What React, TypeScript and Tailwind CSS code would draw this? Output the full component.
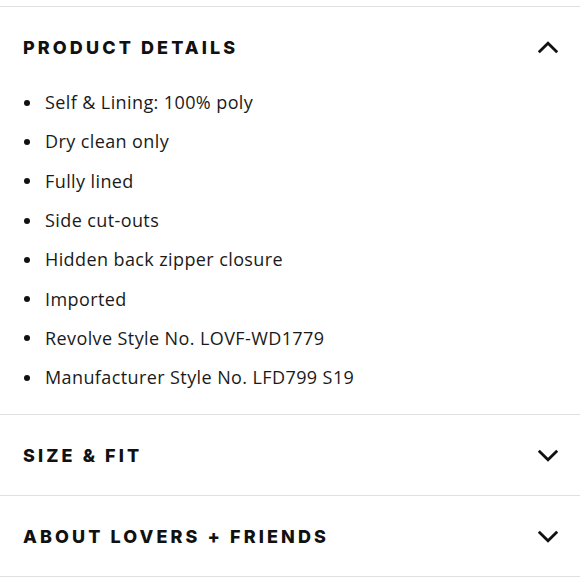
import React, { useState } from 'react';

const items = [
  'Self & Lining: 100% poly',
  'Dry clean only',
  'Fully lined',
  'Side cut-outs',
  'Hidden back zipper closure',
  'Imported',
  'Revolve Style No. LOVF-WD1779',
  'Manufacturer Style No. LFD799 S19',
];

const Chevron = ({ up }: { up: boolean }) => (
  <svg width="22" height="13" viewBox="0 0 22 13" fill="none" className={up ? '' : 'rotate-180'}>
    <path d="M1.8 11.2 L11 2.2 L20.2 11.2" stroke="#111" strokeWidth="2.8" />
  </svg>
);

const headFont = { fontFamily: 'Inter, "Liberation Sans", sans-serif' };

export default function App() {
  const [open, setOpen] = useState('details');

  const Header = ({ id, title, cls }: { id: string; title: string; cls: string }) => (
    <button
      onClick={() => setOpen(open === id ? '' : id)}
      className={`w-full flex items-center justify-between pl-[23px] pr-[21px] ${cls}`}
    >
      <span style={headFont} className="text-[18px] font-extrabold tracking-[3.1px] text-[#111]">
        {title}
      </span>
      <Chevron up={open === id} />
    </button>
  );

  return (
    <div className="w-[580px] h-[580px] bg-white overflow-hidden pt-[6px]" style={{ fontFamily: '"Open Sans", Lato, sans-serif' }}>
      <div className="border-t border-[#e0e0e0]">
        <Header id="details" title="PRODUCT DETAILS" cls="h-[76px] pt-[4px]" />
        <ul className="pb-[17px]">
          {items.map((t) => (
            <li key={t} className="h-[39.3px] flex items-center pl-[24px] text-[18px] tracking-[0.4px] text-[#1a1a1a]">
              <span className="w-[6px] h-[6px] rounded-full bg-[#111] mr-[15px]" />
              {t}
            </li>
          ))}
        </ul>
      </div>
      <div className="border-t border-[#e0e0e0]">
        <Header id="size" title="SIZE & FIT" cls="h-[80px]" />
      </div>
      <div className="border-t border-[#e0e0e0]">
        <Header id="about" title="ABOUT LOVERS + FRIENDS" cls="h-[80px]" />
      </div>
      <div className="border-t border-[#e0e0e0]" />
    </div>
  );
}
